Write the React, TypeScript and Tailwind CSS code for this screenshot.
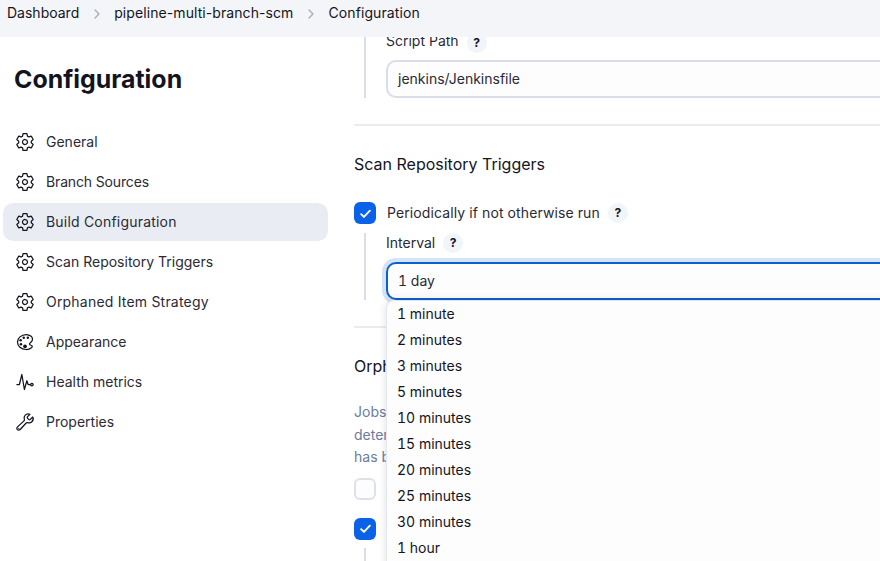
import React from "react";
import {
  IoSettingsOutline,
  IoColorPaletteOutline,
  IoPulseOutline,
  IoBuildOutline,
  IoChevronForward,
} from "react-icons/io5";

const navItems = [
  { label: "General", icon: IoSettingsOutline },
  { label: "Branch Sources", icon: IoSettingsOutline, tight: true },
  { label: "Build Configuration", icon: IoSettingsOutline, active: true, wide: true },
  { label: "Scan Repository Triggers", icon: IoSettingsOutline },
  { label: "Orphaned Item Strategy", icon: IoSettingsOutline, wide: true },
  { label: "Appearance", icon: IoColorPaletteOutline },
  { label: "Health metrics", icon: IoPulseOutline },
  { label: "Properties", icon: IoBuildOutline },
];

const intervals = [
  "1 minute",
  "2 minutes",
  "3 minutes",
  "5 minutes",
  "10 minutes",
  "15 minutes",
  "20 minutes",
  "25 minutes",
  "30 minutes",
  "1 hour",
];

const HelpIcon = () => (
  <span className="ml-2 flex h-5 w-5 shrink-0 items-center justify-center rounded-full bg-[#f1f4f8] text-[12px] font-bold text-[#14141f]">
    ?
  </span>
);

const CheckBox = ({ checked }: { checked?: boolean }) =>
  checked ? (
    <span className="flex h-[22px] w-[22px] shrink-0 items-center justify-center rounded-[6px] bg-[#0b62e8]">
      <svg viewBox="0 0 24 24" className="h-[15px] w-[15px]" fill="none" stroke="white" strokeWidth="3" strokeLinecap="round" strokeLinejoin="round">
        <path d="M5 13l4.5 4.5L19 7.5" />
      </svg>
    </span>
  ) : (
    <span className="block h-[22px] w-[22px] shrink-0 rounded-[6px] border-2 border-[#dde1ea] bg-[#fdfdfd]" />
  );

const App: React.FC = () => {
  return (
    <div className="flex h-[561px] w-[880px] flex-col overflow-hidden bg-white font-['Inter',sans-serif] text-[14px] text-[#14141f]">
      <header className="flex h-[37px] shrink-0 items-start bg-[#f3f5f8] pl-[7px] pt-[4px] leading-[18px]">
        <span>Dashboard</span>
        <IoChevronForward className="mx-[10.5px] mt-[3px] h-[14px] w-[14px] text-[#a4acb9]" />
        <span className="tracking-[0.08px]">pipeline-multi-branch-scm</span>
        <IoChevronForward className="mx-[10.5px] mt-[3px] h-[14px] w-[14px] text-[#a4acb9]" />
        <span className="tracking-[0.1px]">Configuration</span>
      </header>

      <div className="flex min-h-0 flex-1">
        <aside className="w-[340px] shrink-0 pl-[3px] pt-[27px]">
          <h1 className="mb-[29px] ml-[11px] text-[24.9px] font-bold leading-[30px] text-[#14141f]">Configuration</h1>
          <nav className="flex w-[325px] flex-col gap-[2px]">
            {navItems.map((item) => {
              const Icon = item.icon;
              return (
                <div
                  key={item.label}
                  className={`flex h-[38px] items-center gap-[11px] rounded-[10px] pl-[12px] ${item.active ? "bg-[#e9edf3]" : ""}`}
                >
                  <Icon className="h-[20px] w-[20px] shrink-0 text-[#14141f]" />
                  <span
                    className={`mb-[2px] text-[#2a2a36] ${item.wide ? "tracking-[0.2px]" : ""} ${item.tight ? "tracking-[-0.15px]" : ""}`}
                  >
                    {item.label}
                  </span>
                </div>
              );
            })}
          </nav>
        </aside>

        <main className="min-w-0 flex-1 overflow-hidden pl-[14px]">
          <div className="w-[640px] -translate-y-[5px]">
            <div className="ml-[10px] border-l-2 border-[#d9dde7] pl-[20px]">
              <div className="flex h-[21px] items-center text-[#2a2a36]">
                <span className="mb-[4px]">Script Path</span>
                <HelpIcon />
              </div>
              <div className="mt-[7px] flex h-[38px] items-center rounded-[10px] border-2 border-[#d9dde7] bg-[#fdfdfd] pb-[2px] pl-[10px] text-[#2a2a36]">
                jenkins/Jenkinsfile
              </div>
            </div>

            <div className="mt-[26px] h-[2px] bg-[#e9edf2]" />

            <h2 className="mt-[26px] text-[16px] font-normal leading-[24px] text-[#14141f]">Scan Repository Triggers</h2>

            <div className="mt-[26px] flex items-center">
              <CheckBox checked />
              <span className="mb-[1px] ml-[11px] tracking-[0.1px] text-[#2a2a36]">Periodically if not otherwise run</span>
              <HelpIcon />
            </div>

            <div className="ml-[10px] mt-[9px] border-l-2 border-[#d9dde7] pl-[20px]">
              <div className="flex h-[20px] items-center text-[#2a2a36]">
                <span className="mb-[2px]">Interval</span>
                <HelpIcon />
              </div>
              <div className="relative mt-[9px]">
                <div className="flex h-[38px] items-center rounded-[10px] border-2 border-[#0b5fcf] bg-[#fdfdfd] pb-[1px] pl-[10px] tabular-nums text-[#2a2a36] shadow-[0_0_0_4px_#d5e3f7]">
                  1 day
                </div>
                <ul className="absolute left-[0px] top-[38px] z-10 h-[300px] w-[620px] rounded-tl-[8px] border-l border-t border-[#e4e7ee] bg-[#fdfdfd] pl-[10px] shadow-[0_0_8px_rgba(20,20,40,0.12)]">
                  {intervals.map((value) => (
                    <li key={value} className="flex h-[26px] items-center pb-[2px] tabular-nums text-[#14141f]">
                      {value}
                    </li>
                  ))}
                </ul>
              </div>
            </div>

            <div className="mt-[26px] h-[2px] bg-[#e9edf2]" />

            <h2 className="mt-[26px] text-[16px] font-normal leading-[24px] text-[#14141f]">Orphaned Item Strategy</h2>

            <p className="mt-[23px] leading-[22.5px] text-[#6b7d9e]">
              <span className="block">Jobs for removed branches can be kept or discarded as required. The</span>
              <span className="block">determination of whether a branch is orphaned is made when the source</span>
              <span className="block">has been scanned for changes.</span>
            </p>

            <div className="mt-[9px]">
              <CheckBox />
            </div>
            <div className="mt-[18px] flex items-center">
              <CheckBox checked />
              <span className="ml-[11px]">Discard old items</span>
            </div>
            <div className="ml-[10px] mt-[8px] h-[40px] border-l-2 border-[#d9dde7]" />
          </div>
        </main>
      </div>
    </div>
  );
};

export default App;
